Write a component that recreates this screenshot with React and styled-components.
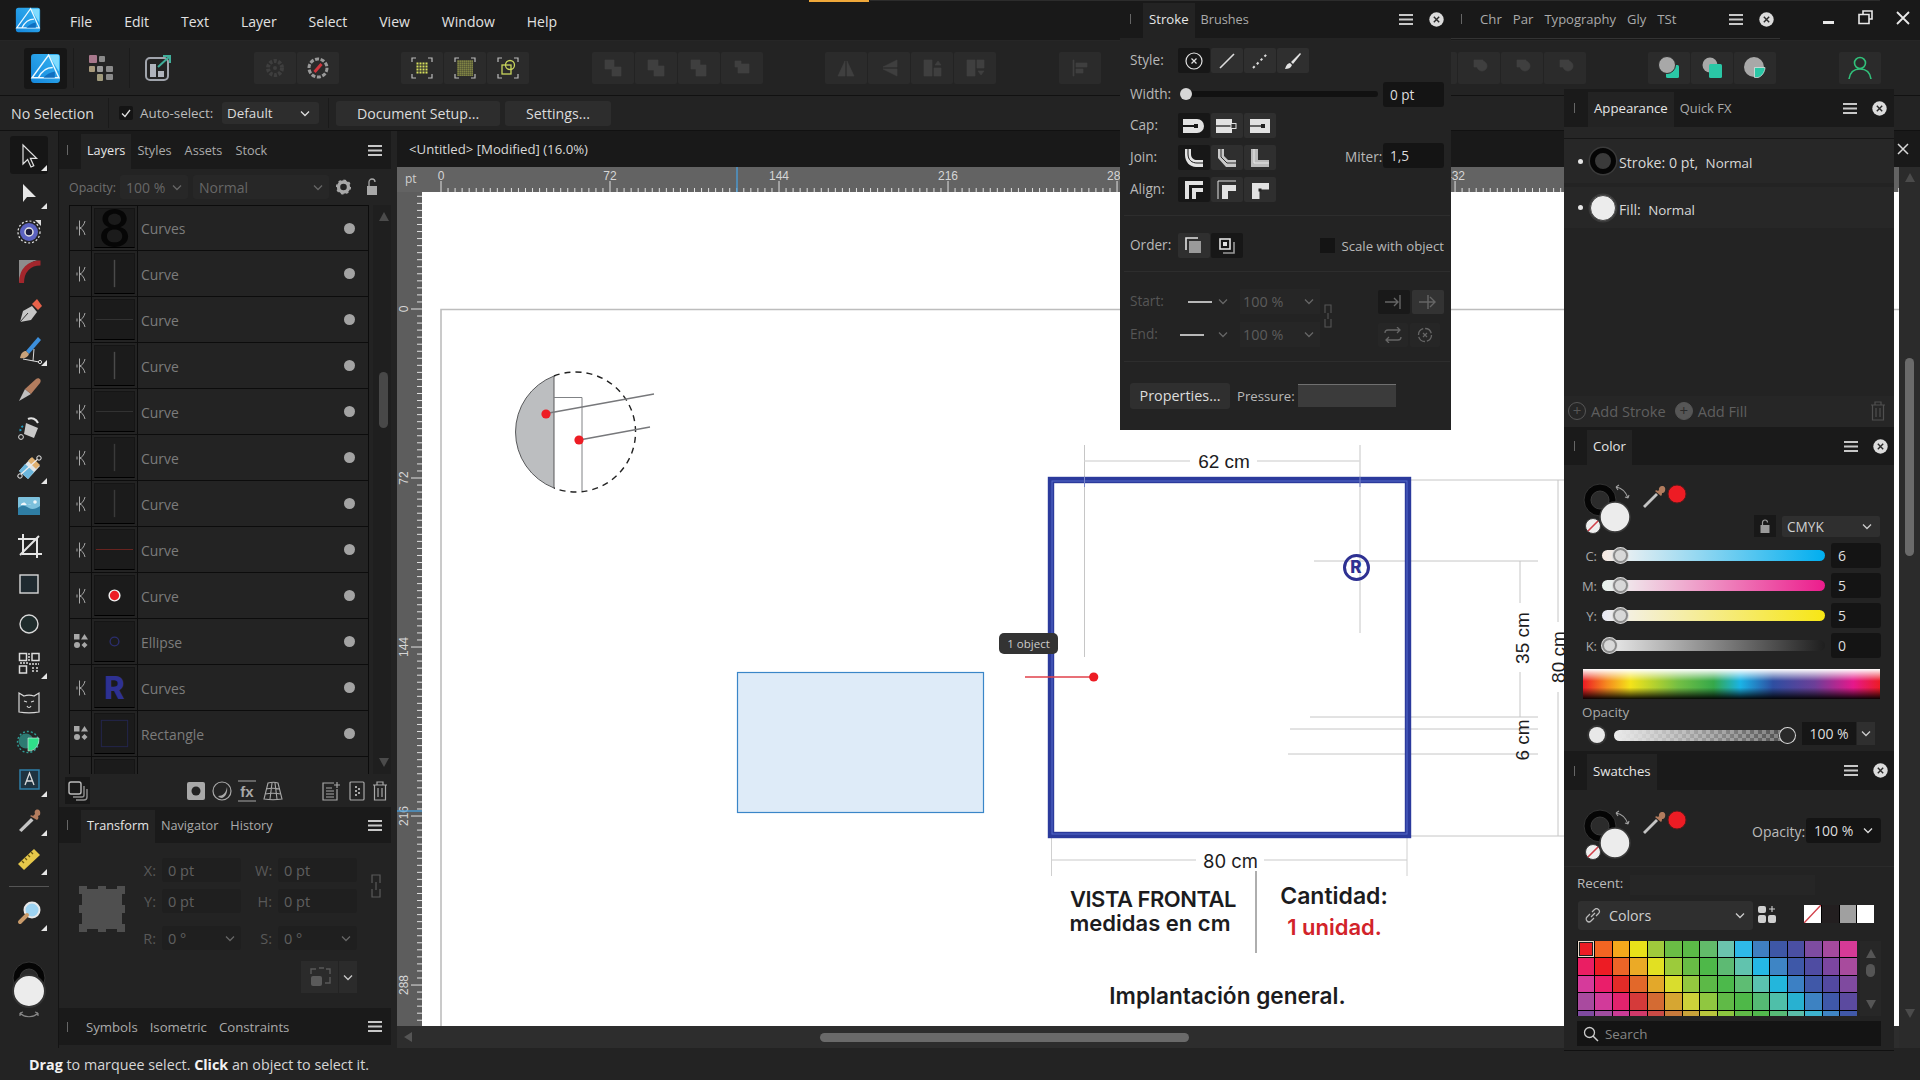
import React from "react";
import styled, { createGlobalStyle } from "styled-components";

const UI_FONT = `"Open Sans", "Noto Sans", sans-serif`;
const CANVAS_X = 422;
const CANVAS_Y = 192;

const GlobalStyle = createGlobalStyle`
  html, body { margin: 0; padding: 0; background: #232323; overflow: hidden; }
  * { box-sizing: border-box; }
  #root { width: 1920px; height: 1080px; }
`;

const Shell = styled.div`
  position: relative;
  width: 1920px;
  height: 1080px;
  display: flex;
  flex-direction: column;
  overflow: hidden;
  background: #232323;
  color: #c8c8c8;
  font-family: ${UI_FONT};
  font-size: 13px;
`;

/* ---------- menu bar ---------- */
const MenuBar = styled.div`
  position: relative;
  height: 41px;
  display: flex;
  align-items: center;
  background: #191919;
  border-bottom: 1px solid #262626;
  padding-left: 15px;
`;
const TopGlow = styled.div`
  position: absolute;
  left: 809px;
  top: 0;
  width: 60px;
  height: 2px;
  background: #efa83a;
`;
const TopHair = styled.div`
  position: absolute;
  left: 870px;
  right: 40px;
  top: 0;
  height: 1px;
  background: #2c2c2c;
`;
const Menus = styled.div`
  display: flex;
  gap: 32px;
  margin-left: 29px;
  margin-top: 3px;
  font-size: 14px;
  color: #e2e2e2;
`;
const PanelTabsTop = styled.div`
  position: absolute;
  left: 1120px;
  top: 3px;
  height: 35px;
  display: flex;
  align-items: stretch;
`;
const TopGroup = styled.div`
  width: ${(p) => p.$w}px;
  display: flex;
  align-items: center;
  position: relative;
`;
const Tick = styled.span`
  width: 1px;
  height: 10px;
  background: #666;
  margin: 0 ${(p) => p.$after ?? 12}px 3px ${(p) => p.$before ?? 10}px;
  flex: none;
`;
const Tab = styled.div`
  align-self: stretch;
  display: flex;
  align-items: center;
  padding: 0 ${(p) => p.$pad ?? 6}px 3px;
  background: ${(p) => (p.$active ? "#232323" : "transparent")};
  color: ${(p) => (p.$active ? "#e6e6e6" : "#aaa")};
  font-size: ${(p) => p.$size ?? 13.2}px;
  white-space: nowrap;
`;
const PushRight = styled.div`
  margin-left: auto;
  display: flex;
  align-items: center;
  gap: ${(p) => p.$gap ?? 15}px;
  padding: 0 ${(p) => p.$pad ?? 7}px 3px 0;
`;
const WindowButtons = styled.div`
  position: absolute;
  left: 1818px;
  top: 9px;
  display: flex;
  gap: 15px;
  align-items: center;
`;
const TopUnderline = styled.div`
  position: absolute;
  left: 1451px;
  top: 38px;
  width: 329px;
  height: 1px;
  background: #333;
`;

/* ---------- toolbar ---------- */
const ToolBar = styled.div`
  height: 55px;
  display: flex;
  align-items: center;
  padding-left: 24px;
  background: #232323;
  border-bottom: 1px solid #111;
`;
const PersonaActive = styled.div`
  width: 43px;
  height: 41px;
  background: #161616;
  display: flex;
  align-items: center;
  justify-content: center;
  border-radius: 3px;
`;
const Persona = styled.div`
  width: 55px;
  display: flex;
  justify-content: center;
`;
const ToolSep = styled.div`
  width: 1px;
  height: 40px;
  background: #1b1b1b;
  margin-left: ${(p) => p.$ml ?? 0}px;
`;
const Group = styled.div`
  display: flex;
  gap: 1px;
  margin-left: ${(p) => p.$ml}px;
`;
const BarBtn = styled.div`
  width: 42px;
  height: 32px;
  background: #2b2b2b;
  border-radius: 2px;
  display: flex;
  align-items: center;
  justify-content: center;
`;

/* ---------- context bar ---------- */
const ContextBar = styled.div`
  height: 35px;
  display: flex;
  align-items: center;
  padding-left: 11px;
  background: #232323;
  border-bottom: 1px solid #111;
  font-size: 14.2px;
  color: #dcdcdc;
`;
const NoSel = styled.div`
  width: 97px;
  white-space: nowrap;
`;
const CtxSep = styled.div`
  width: 1px;
  height: 30px;
  background: #1a1a1a;
  margin-left: ${(p) => p.$ml ?? 0}px;
`;
const Check = styled.div`
  width: 14px;
  height: 14px;
  margin-left: 10px;
  background: #141414;
  border-radius: 2px;
  display: flex;
  align-items: center;
  justify-content: center;
`;
const AutoLabel = styled.div`
  width: 89px;
  padding-left: 7px;
  white-space: nowrap;
  font-size: 13.4px;
  color: #bcbcbc;
`;
const CtxSelect = styled.div`
  width: 97px;
  height: 22px;
  background: #2d2d2d;
  border-radius: 3px;
  display: flex;
  align-items: center;
  justify-content: space-between;
  padding: 0 9px 0 5px;
  font-size: 13.4px;
`;
const CtxButton = styled.div`
  width: ${(p) => p.$w}px;
  height: 25px;
  margin-left: ${(p) => p.$ml}px;
  background: #2d2d2d;
  border-radius: 3px;
  display: flex;
  align-items: center;
  justify-content: center;
  white-space: nowrap;
`;

/* ---------- main ---------- */
const Main = styled.div`
  flex: 1;
  min-height: 0;
  display: flex;
`;
const ToolRail = styled.div`
  width: 59px;
  flex: none;
  padding-top: 5px;
  display: flex;
  flex-direction: column;
  align-items: center;
  background: #232323;
  border-right: 1px solid #141414;
`;
const ToolCell = styled.div`
  position: relative;
  width: 38px;
  height: ${(p) => (p.$active ? 38 : 39.2)}px;
  margin-bottom: ${(p) => (p.$active ? -1 : 0)}px;
  display: flex;
  align-items: center;
  justify-content: center;
  background: ${(p) => (p.$active ? "#161616" : "transparent")};
  border-radius: 3px;
`;
const Corner = styled.span`
  position: absolute;
  right: 1px;
  bottom: 3px;
  width: 0;
  height: 0;
  border-style: solid;
  border-width: 0 0 6px 6px;
  border-color: transparent transparent #e6e6e6 transparent;
`;
const RailRule = styled.div`
  width: 40px;
  height: 1px;
  background: #555;
  margin: 8px 0 7px;
`;
const RailWell = styled.div`
  margin-top: 27px;
`;

const LeftDock = styled.div`
  width: 338px;
  flex: none;
  display: flex;
  flex-direction: column;
  padding-right: 6px;
  background: #232323;
`;
const TabBar = styled.div`
  height: ${(p) => p.$h ?? 38}px;
  flex: none;
  display: flex;
  align-items: stretch;
  background: #1a1a1a;
  padding-top: ${(p) => p.$pt ?? 3}px;
  > ${Tick} {
    align-self: center;
  }
`;
const BarEnd = styled.div`
  margin-left: auto;
  display: flex;
  align-items: center;
  gap: 15px;
  padding: 0 ${(p) => p.$pad ?? 10}px 3px 0;
`;
const LayerOptions = styled.div`
  height: 36px;
  flex: none;
  display: flex;
  align-items: center;
  padding-left: 10px;
  color: #6f6f6f;
  font-size: 13px;
`;
const OptLabel = styled.span`
  width: 45px;
  white-space: nowrap;
  font-size: 12.4px;
`;
const DimSelect = styled.div`
  width: ${(p) => p.$w}px;
  height: 24px;
  margin-left: ${(p) => p.$ml}px;
  display: flex;
  align-items: center;
  justify-content: space-between;
  padding: 0 6px;
  background: #272727;
  border-radius: 3px;
  color: #666;
  font-size: 14px;
`;
const OptIcon = styled.div`
  margin-left: ${(p) => p.$ml}px;
  display: flex;
`;
const LayerArea = styled.div`
  height: 569px;
  flex: none;
  display: flex;
  overflow: hidden;
  padding-left: 10px;
`;
const LayerList = styled.div`
  width: 300px;
  flex: none;
`;
const LayerRow = styled.div`
  height: 46px;
  display: grid;
  grid-template-columns: 22px 46px 1fr 34px;
  align-items: stretch;
  border: 1px solid #0c0c0c;
  border-top: 0;
  &:first-child {
    border-top: 1px solid #0c0c0c;
  }
`;
const LayerType = styled.div`
  display: flex;
  align-items: center;
  justify-content: center;
  border-right: 1px solid #0c0c0c;
`;
const LayerThumb = styled.div`
  display: flex;
  align-items: center;
  justify-content: center;
  min-height: 0;
  border-right: 1px solid #0c0c0c;
  padding: 2px;
`;
const ThumbInner = styled.div`
  width: 100%;
  height: 100%;
  background: #1b1b1b;
  border: 1px solid #151515;
  border-bottom-color: #000;
  display: flex;
  align-items: center;
  justify-content: center;
  font-family: "Inter", "Open Sans", sans-serif;
  font-weight: ${(p) => p.$weight ?? 800};
  line-height: 0.75;
  font-size: ${(p) => p.$size ?? 30}px;
  color: ${(p) => p.$color ?? "#000"};
  svg {
    width: 100%;
    height: 100%;
  }
`;
const LayerName = styled.div`
  display: flex;
  align-items: center;
  padding: 1px 0 0 3px;
  color: #7c7c7c;
  font-size: 13.9px;
`;
const LayerVis = styled.div`
  display: flex;
  align-items: center;
  justify-content: center;
  i {
    width: 11px;
    height: 11px;
    border-radius: 50%;
    background: #a3a3a3;
    margin-left: -4px;
  }
`;
const VScroll = styled.div`
  position: relative;
  width: 21px;
  margin-left: 4px;
  flex: none;
  display: flex;
  flex-direction: column;
  align-items: center;
  background: #1f1f1f;
`;
const ScrollArrow = styled.span`
  position: absolute;
  top: ${(p) => p.$top}px;
  width: 0;
  height: 0;
  border-left: 5px solid transparent;
  border-right: 5px solid transparent;
  ${(p) =>
    p.$down
      ? `border-top: 9px solid ${p.$color ?? "#4b4b4b"};`
      : `border-bottom: 9px solid ${p.$color ?? "#4b4b4b"};`}
`;
const ScrollThumb = styled.span`
  position: absolute;
  top: ${(p) => p.$top}px;
  width: 9px;
  height: ${(p) => p.$h}px;
  background: ${(p) => p.$color ?? "#484848"};
  border-radius: 5px;
`;
const LayerFooter = styled.div`
  height: 33px;
  flex: none;
  display: flex;
  align-items: center;
  padding-left: 6px;
`;
const DarkIcon = styled.div`
  width: 26px;
  height: 27px;
  background: #181818;
  display: flex;
  align-items: center;
  justify-content: center;
  margin-right: 93px;
`;
const FooterIcon = styled.div`
  width: ${(p) => p.$w ?? 26}px;
  margin-left: ${(p) => p.$ml ?? 0}px;
  display: flex;
  justify-content: center;
`;
const TransformBody = styled.div`
  height: 165px;
  flex: none;
  position: relative;
  display: flex;
  padding: 15px 0 0 20px;
  color: #5c5c5c;
  font-size: 14.5px;
`;
const Anchor = styled.div`
  width: 46px;
  margin-top: 28px;
`;
const TfGrid = styled.div`
  margin-left: 17px;
  display: grid;
  grid-template-columns: 20px 79px 14px 23px 79px;
  grid-template-rows: 24px 7px 24px 13px 24px;
  align-items: center;
  align-self: flex-start;
`;
const TfLabel = styled.div`
  text-align: right;
  padding-right: 6px;
  grid-column: ${(p) => p.$col};
  grid-row: ${(p) => p.$row};
  color: #595959;
`;
const TfInput = styled.div`
  height: 24px;
  background: #1f1f1f;
  border-radius: 3px;
  display: flex;
  align-items: center;
  justify-content: space-between;
  padding: 0 6px;
  color: #5f5f5f;
  grid-column: ${(p) => p.$col};
  grid-row: ${(p) => p.$row};
`;
const TfLink = styled.div`
  margin-left: 14px;
  margin-top: 15px;
`;
const TfAction = styled.div`
  position: absolute;
  left: 242px;
  top: 118px;
  display: flex;
  gap: 1px;
`;
const TfActionBtn = styled.div`
  width: ${(p) => p.$w}px;
  height: 32px;
  background: #2b2b2b;
  display: flex;
  align-items: center;
  justify-content: center;
`;

/* ---------- workspace ---------- */
const Workspace = styled.div`
  flex: 1;
  min-width: 0;
  display: flex;
  flex-direction: column;
`;
const DocBar = styled.div`
  height: 36px;
  flex: none;
  display: flex;
  align-items: center;
  justify-content: space-between;
  padding: 0 11px 0 12px;
  background: #191919;
  color: #d8d8d8;
  font-size: 13.2px;
`;
const DocGrid = styled.div`
  flex: 1;
  min-height: 0;
  display: grid;
  grid-template-columns: 25px 1fr 21px;
  grid-template-rows: 25px 1fr 22px;
`;
const PtCell = styled.div`
  background: #636363;
  color: #d0d0d0;
  font-size: 12px;
  padding: 3px 0 0 8px;
`;
const RulerCell = styled.div`
  background: ${(p) => p.$bg ?? "#636363"};
  overflow: hidden;
  display: flex;
`;
const RightScroll = styled.div`
  grid-row: 1 / 4;
  grid-column: 3;
  position: relative;
  display: flex;
  justify-content: center;
  background: #2b2b2b;
`;
const Canvas = styled.div`
  position: relative;
  background: #fff;
  overflow: hidden;
`;
const Drawing = styled.svg`
  position: absolute;
  left: 0;
  top: 0;
`;
const PageText = styled.span`
  position: absolute;
  left: ${(p) => p.$x - CANVAS_X}px;
  top: ${(p) => p.$y - CANVAS_Y}px;
  transform: translate(-50%, -50%) rotate(${(p) => p.$rot ?? 0}deg);
  white-space: nowrap;
  line-height: 1;
  letter-spacing: ${(p) => p.$track ?? 0}px;
  font-family: ${(p) =>
    p.$sans ? `"Liberation Sans", Arial, sans-serif` : `"Inter", "Open Sans", sans-serif`};
  font-size: ${(p) => p.$size}px;
  font-weight: ${(p) => p.$weight ?? 400};
  color: ${(p) => p.$color ?? "#1c1c1e"};
`;
const RegMark = styled.span`
  position: absolute;
  left: ${1356 - CANVAS_X - 13.5}px;
  top: ${567 - CANVAS_Y - 13.5}px;
  width: 27px;
  height: 27px;
  border: 3.5px solid #2e3192;
  border-radius: 50%;
  display: flex;
  align-items: center;
  justify-content: center;
  font-family: "Inter", "Open Sans", sans-serif;
  font-size: 17px;
  line-height: 1;
  font-weight: 800;
  color: #2e3192;
`;
const ObjectTip = styled.div`
  position: absolute;
  left: ${999 - CANVAS_X}px;
  top: ${633 - CANVAS_Y}px;
  width: 59px;
  height: 21px;
  border-radius: 5px;
  background: #333;
  color: #ccc;
  font-size: 11.5px;
  display: flex;
  align-items: center;
  justify-content: center;
`;
const HScroll = styled.div`
  grid-column: 1 / 3;
  position: relative;
  background: #2d2d2d;
`;
const HThumb = styled.div`
  position: absolute;
  left: ${820 - 397}px;
  top: 7px;
  width: 369px;
  height: 9px;
  border-radius: 5px;
  background: #6a6a6a;
`;
const HArrow = styled.span`
  position: absolute;
  left: 7px;
  top: 6px;
  width: 0;
  height: 0;
  border-top: 5px solid transparent;
  border-bottom: 5px solid transparent;
  border-right: 8px solid #555;
`;
const StatusBar = styled.div`
  height: 32px;
  flex: none;
  padding-left: 29px;
  display: flex;
  align-items: center;
  background: #232323;
  color: #d6d6d6;
  font-size: 14.3px;
  b {
    color: #f2f2f2;
    font-weight: 700;
  }
  span {
    white-space: pre;
  }
`;

/* ---------- stroke panel ---------- */
const StrokePanel = styled.div`
  position: absolute;
  left: 1120px;
  top: 38px;
  width: 331px;
  height: 392px;
  background: #232323;
  padding: 0 7px 0 10px;
  font-size: 13.6px;
  color: #b8b8b8;
`;
const SRow = styled.div`
  position: relative;
  display: flex;
  align-items: center;
  height: 25px;
  margin-top: ${(p) => p.$mt}px;
  color: ${(p) => p.$color ?? "inherit"};
`;
const SLabel = styled.div`
  width: 48px;
  flex: none;
  padding-bottom: 2px;
`;
const BtnRow = styled.div`
  display: flex;
  gap: 1px;
`;
const SBtn = styled.div`
  width: 32px;
  height: 25px;
  display: flex;
  align-items: center;
  justify-content: center;
  background: ${(p) => (p.$on ? "#171717" : "#2f2f2f")};
  border-radius: 2px;
`;
const WidthTrack = styled.div`
  position: relative;
  width: 198px;
  height: 6px;
  margin: 0 0 2px 2px;
  border-radius: 3px;
  background: #111;
`;
const WidthKnob = styled.span`
  position: absolute;
  left: 0;
  top: -3px;
  width: 12px;
  height: 12px;
  border-radius: 50%;
  background: #d6d6d6;
`;
const SInput = styled.div`
  position: absolute;
  left: 253px;
  top: ${(p) => p.$top ?? 0}px;
  width: 61px;
  height: 25px;
  background: #141414;
  border-radius: 3px;
  display: flex;
  align-items: center;
  padding-left: 7px;
  color: #ddd;
`;
const MiterLabel = styled.div`
  position: absolute;
  left: 215px;
  padding-bottom: 2px;
  color: #b8b8b8;
`;
const Rule = styled.div`
  height: 1px;
  background: #2d2d2d;
  margin: ${(p) => p.$mt}px -6px 0 -6px;
`;
const ScaleCheck = styled.div`
  display: flex;
  align-items: center;
  gap: 6px;
  margin-left: auto;
  font-size: 13.2px;
  white-space: nowrap;
  span:first-child {
    width: 15px;
    height: 15px;
    background: #141414;
  }
`;
const LineSelect = styled.div`
  width: 52px;
  display: flex;
  align-items: center;
  gap: ${(p) => p.$gap}px;
  justify-content: flex-end;
  padding-right: 2px;
`;
const PctSelect = styled.div`
  width: 80px;
  height: 25px;
  margin-left: 10px;
  display: flex;
  align-items: center;
  justify-content: space-between;
  padding: 0 6px 0 3px;
  background: #262626;
  color: #5c5c5c;
  font-size: 14.4px;
`;
const ArrowBtns = styled.div`
  position: absolute;
  left: 248px;
  display: flex;
  gap: 2px;
`;
const ArrowBtn = styled.div`
  width: ${(p) => p.$w ?? 32}px;
  height: 24px;
  background: ${(p) => p.$bg};
  display: flex;
  align-items: center;
  justify-content: center;
  border-radius: 2px;
`;
const StrokeLink = styled.div`
  position: absolute;
  left: 1324px;
  top: 304px;
`;
const Props = styled.div`
  width: 100px;
  height: 26px;
  background: #2f2f2f;
  border-radius: 3px;
  display: flex;
  align-items: center;
  justify-content: center;
  color: #ddd;
  font-size: 14.4px;
`;
const PressureLabel = styled.div`
  margin-left: 7px;
  width: 61px;
  font-size: 13.2px;
`;
const PressureBox = styled.div`
  width: 98px;
  height: 23px;
  background: #3b3b3b;
  border-top: 1px solid #707070;
`;

/* ---------- right studio ---------- */
const RightDock = styled.div`
  position: absolute;
  left: 1564px;
  top: 89px;
  width: 330px;
  height: 962px;
  display: flex;
  flex-direction: column;
  background: #232323;
  border-bottom: 1px solid #111;
`;
const PanelBody = styled.div`
  position: relative;
  height: ${(p) => p.$h}px;
  flex: none;
`;
const Strip = styled.div`
  height: 12px;
  background: #262626;
  border-bottom: 1px solid #161616;
`;
const ApRow = styled.div`
  height: ${(p) => p.$h}px;
  margin-top: ${(p) => p.$mt ?? 0}px;
  background: #272727;
  display: flex;
  align-items: center;
  padding-left: 14px;
  color: #d8d8d8;
  font-size: 14.2px;
  white-space: pre;
`;
const ApText = styled.span`
  padding-top: 3px;
`;
const Bullet = styled.span`
  width: 5px;
  height: 5px;
  border-radius: 50%;
  background: #e6e6e6;
  margin-right: 7px;
`;
const Well = styled.span`
  width: 26px;
  height: 26px;
  border-radius: 50%;
  margin-right: 3px;
  flex: none;
  background: ${(p) => (p.$fill ? "#ececec" : "#3a3a3a")};
  border: ${(p) => (p.$fill ? "1px solid #444" : "5px solid #050505")};
  box-shadow: 0 0 0 1.5px #3a3a3a;
`;
const Small = styled.span`
  font-size: 13.4px;
`;
const AddRow = styled.div`
  position: absolute;
  left: 0;
  right: 0;
  bottom: 0;
  height: 31px;
  display: flex;
  align-items: center;
  padding: 0 0 2px 4px;
  background: #262626;
  color: #5f5f5f;
  font-size: 14.6px;
  white-space: nowrap;
`;
const AddIcon = styled.span`
  width: 18px;
  height: 18px;
  border-radius: 50%;
  margin-left: ${(p) => p.$ml ?? 0}px;
  margin-right: 5px;
  display: flex;
  align-items: center;
  justify-content: center;
  background: ${(p) => (p.$solid ? "#565656" : "transparent")};
  border: 1px solid #565656;
  color: ${(p) => (p.$solid ? "#2a2a2a" : "#565656")};
  font-size: 15px;
  line-height: 1;
`;
const AddTrash = styled.span`
  margin-left: auto;
  margin-right: 8px;
  display: flex;
`;
const WellGroup = styled.div`
  position: absolute;
  left: 19px;
  top: ${(p) => p.$top}px;
`;
const Lock = styled.div`
  position: absolute;
  left: 190px;
  top: 50px;
  width: 22px;
  height: 22px;
  background: #181818;
  display: flex;
  align-items: center;
  justify-content: center;
`;
const Select = styled.div`
  position: absolute;
  left: 218px;
  top: 51px;
  width: 98px;
  height: 21px;
  background: #2f2f2f;
  border-radius: 2px;
  display: flex;
  align-items: center;
  justify-content: space-between;
  padding: 0 8px 0 5px;
  color: #d0d0d0;
  font-size: 13.6px;
`;
const Sliders = styled.div`
  position: absolute;
  left: 0;
  top: 78px;
  display: grid;
  grid-template-columns: 38px 223px 50px;
  grid-auto-rows: 25px;
  row-gap: 5px;
  column-gap: 0;
  align-items: center;
`;
const SliderLabel = styled.div`
  text-align: right;
  padding-right: 5px;
  color: #a8a8a8;
  font-size: 13px;
`;
const Track = styled.div`
  position: relative;
  width: 223px;
  height: 11px;
  border-radius: 6px;
  background: ${(p) => p.$bg};
`;
const Knob = styled.span`
  position: absolute;
  left: ${(p) => p.$x}px;
  top: 50%;
  width: 15px;
  height: 15px;
  margin: -7.5px 0 0 -7.5px;
  border-radius: 50%;
  background: ${(p) => p.$fill ?? "#d8d8d8"};
  border: 2px solid ${(p) => p.$ring ?? "#8c8c8c"};
  box-shadow: 0 0 0 1px #d8d8d8;
`;
const ValueBox = styled.div`
  margin-left: 6px;
  width: 50px;
  height: 25px;
  background: #141414;
  border-radius: 3px;
  display: flex;
  align-items: center;
  padding-left: 7px;
  color: #dedede;
  font-size: 14px;
`;
const Spectrum = styled.div`
  position: absolute;
  left: 19px;
  top: 204px;
  width: 297px;
  height: 30px;
  background:
    linear-gradient(to bottom, rgba(255, 255, 255, 1) 0%, rgba(255, 255, 255, 0) 40%, rgba(0, 0, 0, 0) 62%, rgba(0, 0, 0, 0.95) 100%),
    linear-gradient(to right, #ed1c24 0%, #f58a1f 8%, #f4e31a 16%, #74bf44 32%, #35a84a 44%, #1ab3e6 53%, #2e4ea1 64%, #6c3f98 78%, #e5188b 91%, #ed1c24 100%);
`;
const OpacityCaption = styled.div`
  position: absolute;
  left: 18px;
  top: 238px;
  color: #a8a8a8;
  font-size: 13.4px;
`;
const OpacityDot = styled.span`
  position: absolute;
  left: 25px;
  top: 262px;
  width: 16px;
  height: 16px;
  border-radius: 50%;
  background: #e8e8e8;
  box-shadow: 0 0 0 2px #333;
`;
const OpacityTrack = styled.div`
  position: absolute;
  left: 50px;
  top: 265px;
  width: 173px;
  height: 11px;
  border-radius: 6px;
  background:
    linear-gradient(to right, rgba(235, 235, 235, 1), rgba(235, 235, 235, 0.05)),
    repeating-conic-gradient(#777 0 25%, #444 0 50%) 0 0 / 8px 8px;
`;
const OpacityValue = styled.div`
  position: absolute;
  left: ${(p) => p.$x}px;
  top: ${(p) => p.$y}px;
  width: 54px;
  height: 23px;
  background: #161616;
  display: flex;
  align-items: center;
  justify-content: center;
  font-size: 14px;
  color: #dedede;
`;
const OpacityChevron = styled.div`
  position: absolute;
  left: 293px;
  top: 257px;
  width: 18px;
  height: 23px;
  background: #2f2f2f;
  display: flex;
  align-items: center;
  justify-content: center;
`;
const SwOpacityLabel = styled.div`
  position: absolute;
  left: 188px;
  top: 32px;
  color: #bbb;
  font-size: 14px;
`;
const SwOpacity = styled.div`
  position: absolute;
  left: 242px;
  top: 28px;
  width: 75px;
  height: 25px;
  background: #141414;
  border-radius: 3px;
  display: flex;
  align-items: center;
  justify-content: space-between;
  padding: 0 8px;
  color: #dedede;
  font-size: 14px;
`;
const SwRule = styled.div`
  position: absolute;
  left: 0;
  right: 0;
  top: 76px;
  height: 1px;
  background: #2a2a2a;
`;
const RecentLabel = styled.div`
  position: absolute;
  left: 13px;
  top: 84px;
  color: #bbb;
  font-size: 13.4px;
`;
const RecentBox = styled.div`
  position: absolute;
  left: 66px;
  top: 85px;
  width: 185px;
  height: 20px;
  background: #262626;
`;
const ColorsSelect = styled.div`
  position: absolute;
  left: 14px;
  top: 111px;
  width: 175px;
  height: 29px;
  background: #2f2f2f;
  border-radius: 3px;
  display: flex;
  align-items: center;
  padding: 0 8px 0 7px;
  gap: 8px;
  color: #d0d0d0;
  font-size: 14.2px;
  svg:last-child {
    margin-left: auto;
  }
`;
const AddSwatch = styled.div`
  position: absolute;
  left: 194px;
  top: 115px;
  display: flex;
`;
const QuickSwatches = styled.div`
  position: absolute;
  left: 240px;
  top: 115px;
  width: 70px;
  height: 18px;
  display: grid;
  grid-template-columns: repeat(4, 1fr);
  gap: 1px;
  background: #000;
`;
const Quick = styled.div`
  background: ${(p) => p.$c};
  display: flex;
`;
const SwatchWrap = styled.div`
  position: absolute;
  left: 13px;
  top: 151px;
  width: 304px;
  height: 75px;
  display: flex;
`;
const SwatchGrid = styled.div`
  width: 280px;
  height: 75px;
  overflow: hidden;
  background: #000;
  display: grid;
  grid-template-columns: repeat(16, 1fr);
  grid-auto-rows: 16.4px;
  gap: 1px;
  padding: 0 0.5px;
`;
const Swatch = styled.div`
  background: ${(p) => p.$c};
  box-shadow: ${(p) => (p.$picked ? "inset 0 0 0 1px #e8d8c8, inset 0 0 0 2px #222" : "none")};
`;
const SwatchScroll = styled.div`
  position: relative;
  width: 21px;
  margin-left: 3px;
  background: #272727;
  display: flex;
  justify-content: center;
`;
const SearchBox = styled.div`
  position: absolute;
  left: 13px;
  top: 231px;
  width: 304px;
  height: 25px;
  background: #141414;
  display: flex;
  align-items: center;
  padding-left: 6px;
  gap: 6px;
  color: #858585;
  font-size: 13.4px;
`;

/* ---------- icons ---------- */
const Burger = () => (
  <svg width="14" height="13" viewBox="0 0 14 13">
    <path d="M0 1h14v2H0zM0 5.5h14v2H0zM0 10h14v2H0z" fill="#c8c8c8" />
  </svg>
);
const CloseDot = () => (
  <svg width="15" height="15" viewBox="0 0 15 15">
    <circle cx="7.5" cy="7.5" r="7.2" fill="#dcdcdc" />
    <path d="M4.8 4.8l5.4 5.4M10.2 4.8l-5.4 5.4" stroke="#2a2a2a" strokeWidth="1.4" />
  </svg>
);
const Chevron = ({ c = "#b8b8b8", s = 10 }) => (
  <svg width={s} height={s * 0.7} viewBox="0 0 10 7">
    <path d="M1 1.5l4 4 4-4" fill="none" stroke={c} strokeWidth="1.3" />
  </svg>
);

const Tools = {
  move: (
    <path d="M9 5v19l4.6-4.4 3.4 7.4 2.8-1.3-3.4-7.4H22.6z" fill="#1a1a1a" stroke="#e2e2e2" strokeWidth="1.2" />
  ),
  node: <path d="M9 6v18l4-5h9z" fill="#e6e6e6" />,
  contour: (
    <g>
      <circle cx="15" cy="15" r="11" fill="none" stroke="#e8e8e8" strokeWidth="1.2" strokeDasharray="2 2" />
      <circle cx="15" cy="15" r="9" fill="#5b62c0" />
      <circle cx="15" cy="15" r="4" fill="#1c1c3c" stroke="#e4e4e4" strokeWidth="1.5" />
      <path d="M21 3h6v6z" fill="#ddd" />
    </g>
  ),
  corner: (
    <g>
      <path d="M5 4h22c-12 0-17 8-19 22H5z" fill="#8d8d8d" />
      <path d="M7.5 27c0-13 8-20 19-20" fill="none" stroke="#a3262c" strokeWidth="5" />
    </g>
  ),
  pen: (
    <g>
      <path d="M6 27l3-11 9-5 5 6-6 8z" fill="#c6c6c6" />
      <path d="M6 27l8-9" stroke="#333" strokeWidth="1" />
      <path d="M18 9l5-5 5 7-4 4z" fill="#e8624a" />
    </g>
  ),
  vbrush: (
    <g>
      <path d="M12 17L24 3l3 3-12 14z" fill="#3c8fdc" />
      <path d="M6 24c1-5 3-7 6-7l3 3c-1 3-4 5-9 4z" fill="#c8a27a" />
      <path d="M19 27l1-12M9 25l16 3" stroke="#ddd" strokeWidth="1" />
      <circle cx="26" cy="28" r="1.6" fill="#222" stroke="#ddd" />
    </g>
  ),
  pencil: (
    <g>
      <path d="M5 27l6-12 6 5z" fill="#c0c0c0" />
      <path d="M11 15L22 5c3-2 6 1 4 4L17 20z" fill="#b27c5e" />
    </g>
  ),
  bucket: (
    <g>
      <path d="M12 10l12 5-4 10-10-4z" fill="#c8c8c8" />
      <path d="M14 6c4-2 8 0 10 4" fill="none" stroke="#e2e2e2" strokeWidth="2" />
      <path d="M9 13c-3 2-3 5-2 7" stroke="#1e9abf" strokeWidth="2" fill="none" strokeDasharray="2 2" />
      <circle cx="7" cy="24" r="2.4" fill="#222" stroke="#ddd" />
    </g>
  ),
  gradient: (
    <g>
      <path d="M5 19L17 6l9 8-12 13z" fill="#dfe6ea" />
      <path d="M11 12l9 8-6 7-9-8z" fill="#6cb6dc" />
      <path d="M14 9l4-4 8 8-4 4z" fill="#e0b070" />
      <path d="M4 25L26 5" stroke="#eee" strokeWidth="1.2" />
      <circle cx="6" cy="24" r="2.2" fill="#222" stroke="#eee" />
      <circle cx="25" cy="6" r="2.2" fill="#222" stroke="#eee" />
    </g>
  ),
  image: (
    <g>
      <rect x="4" y="6" width="22" height="18" fill="#7cc0dc" rx="1" />
      <path d="M4 17c5-4 8-2 11 0s7 1 11-2v9H4z" fill="#2f7ea4" />
      <path d="M7 13c2-2 4-2 5 0s4 0 5 1H7z" fill="#eef6fa" />
      <circle cx="21" cy="11" r="1.8" fill="#eef6fa" />
    </g>
  ),
  crop: (
    <path d="M9 4v20h19M4 9h19v19M6 25L25 6" fill="none" stroke="#e4e4e4" strokeWidth="2" />
  ),
  rect: <rect x="6" y="6" width="18" height="18" fill="#1f2a30" stroke="#d8d8d8" strokeWidth="1.4" />,
  ellipse: <circle cx="15" cy="15" r="9" fill="#1f2c2c" stroke="#d8d8d8" strokeWidth="1.4" />,
  qr: (
    <g fill="none" stroke="#dcdcdc" strokeWidth="1.5">
      <rect x="5.5" y="5.5" width="7" height="7" />
      <rect x="18" y="5.5" width="7" height="7" />
      <rect x="5.5" y="18" width="7" height="7" />
      <path d="M15 5v8M15 16h10M19 19v6M23 19v6M6 15h8" strokeDasharray="2 1" />
    </g>
  ),
  cat: (
    <g>
      <path d="M5 6l5 3c3-1 7-1 10 0l5-3v19c-6 1-14 1-20 0z" fill="#272727" stroke="#d8d8d8" strokeWidth="1.2" />
      <path d="M10 14l3 1M20 14l-3 1M13 19c1 2 3 2 4 0" fill="none" stroke="#d8d8d8" strokeWidth="1.2" />
    </g>
  ),
  assets: (
    <g>
      <circle cx="14" cy="16" r="10.5" fill="none" stroke="#2f9f98" strokeWidth="1.4" strokeDasharray="2 2" />
      <circle cx="12" cy="15" r="7.5" fill="#2d7a72" />
      <path d="M14 12h11c0 8-4 13-11 13z" fill="#2fe08a" stroke="#e4e4e4" strokeWidth="0.6" />
    </g>
  ),
  frame: (
    <g>
      <rect x="6" y="5" width="19" height="19" fill="#1f3340" stroke="#2f7fa8" strokeWidth="1.5" />
      <path d="M11 20l4.5-12L20 20M12.5 16h6" fill="none" stroke="#dcdcdc" strokeWidth="1.3" />
    </g>
  ),
  dropper: (
    <g>
      <path d="M5 25L17 13l2.5 2.5L7.5 27z" fill="#c4c4c4" />
      <path d="M16 11c1-1 2-1 3 0l2-2c-2-6 7-6 5 1l-2 1c1 2 0 3-1 4z" fill="#b27c5e" />
    </g>
  ),
  ruler: (
    <g>
      <path d="M4 20L20 5l6 6-16 15z" fill="#e6c84a" />
      <path d="M8 17l2 2M11 14l2 2M14 11l2 2M17 8l2 2" stroke="#6c5a12" strokeWidth="1.3" />
    </g>
  ),
  zoom: (
    <g>
      <circle cx="18" cy="11" r="7.5" fill="#9dd3f2" stroke="#e8e8e8" strokeWidth="2" />
      <path d="M13 16l-7 7" stroke="#c89a6a" strokeWidth="4" strokeLinecap="round" />
    </g>
  ),
};

const ToolIcon = ({ name }) => (
  <svg width="30" height="30" viewBox="0 0 30 30">
    {Tools[name]}
  </svg>
);

const toolList = [
  ["move", 1, 1],
  ["node", 0, 1],
  ["contour", 0, 0],
  ["corner", 0, 0],
  ["pen", 0, 0],
  ["vbrush", 0, 1],
  ["pencil", 0, 0],
  ["bucket", 0, 0],
  ["gradient", 0, 1],
  ["image", 0, 0],
  ["crop", 0, 0],
  ["rect", 0, 0],
  ["ellipse", 0, 0],
  ["qr", 0, 1],
  ["cat", 0, 0],
  ["assets", 0, 0],
  ["frame", 0, 1],
  ["dropper", 0, 1],
  ["ruler", 0, 1],
];

const CurveGlyph = () => (
  <svg width="10" height="16" viewBox="0 0 10 16">
    <path d="M3.5 0.5v15M9 1C8 5 6 7.5 3.5 8 6 8.5 8 11 9 15M1 6.5v3" fill="none" stroke="#a8a8a8" strokeWidth="1" />
  </svg>
);
const ShapeGlyph = () => (
  <svg width="14" height="15" viewBox="0 0 14 15">
    <rect x="0" y="0" width="5.5" height="5.5" fill="#a8a8a8" />
    <path d="M10.5 0l3.5 5.5H7z" fill="#a8a8a8" />
    <circle cx="3" cy="11" r="3" fill="#a8a8a8" />
    <path d="M10.5 8l3 3-3 3-3-3z" fill="#a8a8a8" />
  </svg>
);
const ThumbLine = ({ v, c = "#3a3a3a" }) => (
  <svg viewBox="0 0 40 40">
    {v ? <path d="M20 6v28" stroke={c} strokeWidth="1.5" /> : <path d="M1 20h38" stroke={c} strokeWidth="1" />}
  </svg>
);
const DotGrid = ({ from, n, step, size }) => (
  <>
    {Array.from({ length: n * n }, (_, i) => (
      <rect
        key={i}
        x={from + (i % n) * step}
        y={from + Math.floor(i / n) * step}
        width={size}
        height={size}
        fill="#d6df5c"
      />
    ))}
  </>
);

const layerRows = [
  { name: "Curves", thumb: "eight" },
  { name: "Curve", thumb: <ThumbLine v c="#4a4a4a" /> },
  { name: "Curve", thumb: <ThumbLine c="#333" /> },
  { name: "Curve", thumb: <ThumbLine v c="#4a4a4a" /> },
  { name: "Curve", thumb: <ThumbLine c="#333" /> },
  { name: "Curve", thumb: <ThumbLine v /> },
  { name: "Curve", thumb: <ThumbLine v /> },
  { name: "Curve", thumb: <ThumbLine c="#6a2420" /> },
  {
    name: "Curve",
    thumb: (
      <svg viewBox="0 0 40 40">
        <circle cx="20" cy="20" r="5.5" fill="#ed1c24" stroke="#f0f0f0" strokeWidth="1.5" />
      </svg>
    ),
  },
  {
    name: "Ellipse",
    shape: true,
    thumb: (
      <svg viewBox="0 0 40 40">
        <circle cx="20" cy="20" r="4.5" fill="none" stroke="#2b2e6e" strokeWidth="1.4" />
      </svg>
    ),
  },
  { name: "Curves", thumb: "R" },
  {
    name: "Rectangle",
    shape: true,
    thumb: (
      <svg viewBox="0 0 40 40">
        <rect x="6.5" y="6.5" width="27" height="27" fill="none" stroke="#24264e" strokeWidth="1" />
      </svg>
    ),
  },
  { name: "", thumb: null, tail: true },
];

const swatchColors = [
  "#ed1c24 #f26522 #f5a81c #e8e11a #9fca3c #6abd45 #5bb947 #62bb6a #6bc4ae #2eb9e9 #3f7fc1 #3e57a6 #4a4fa3 #7e4ca1 #a54a9e #d63a96",
  "#ea1e63 #ed1c24 #ec6527 #ebaa26 #e2e022 #9ccb3b #68bc45 #4eb849 #5dba73 #61c3ae #25b8e6 #3e85c5 #3e58a8 #4f4ca2 #7c46a0 #a84b9d",
  "#d63a9b #ea1e6a #e32b28 #e2682a #e3a82a #d9dd2d #93c83f #5cb947 #4cb94b #5ebd73 #5ac2b0 #23b6dc #3c80c4 #4058a8 #5349a1 #7f4a9f",
  "#a94a9f #d23a9a #e2236d #d53a3a #d46b33 #d6a632 #cdd13a #90c740 #60ba47 #4eb848 #55ba74 #4fbfa9 #28b1d1 #3d82c2 #3f58a9 #5b4a9f",
  "#7f4aa0 #a04da0 #ca3b95 #d0396a #c94a45 #c7793b #c8a33a #b8c53d #8cc53f #60b947 #52b84d #57ba76 #5abdaa #3db3cf #3f85c4 #4058a8",
]
  .join(" ")
  .split(" ");

const cmyk = [
  ["C:", "linear-gradient(to right, #f6e8e0 0%, #e4eef2 12%, #00aeef 100%)", 18, "6"],
  ["M:", "linear-gradient(to right, #e6f2ec 0%, #f0e4ea 12%, #ec1c8c 100%)", 18, "5"],
  ["Y:", "linear-gradient(to right, #e6e8f4 0%, #f4f0e0 12%, #f7e614 100%)", 18, "5"],
  ["K:", "linear-gradient(to right, #f0f0f0 0%, #1e1e1e 100%)", 7, "0"],
];

const AppLogo = ({ size = 30 }) => (
  <svg width={size} height={size} viewBox="0 0 30 30">
    <defs>
      <linearGradient id="afLogo" x1="0" y1="1" x2="1" y2="0">
        <stop offset="0" stopColor="#1487dc" />
        <stop offset="1" stopColor="#37b4f2" />
      </linearGradient>
    </defs>
    <rect x="1" y="1" width="28" height="28" rx="3" fill="url(#afLogo)" />
    <path d="M18 2h10v16z" fill="#7fdcff" />
    <path d="M2 24L18 2l10 22H2zM8 24c3-6 8-10 14-10" fill="none" stroke="#ecf9ff" strokeWidth="1.4" />
    <path d="M13 24c3-3 6-5 11-6v6z" fill="#0f6fc0" />
  </svg>
);

const WellCluster = () => (
  <svg width="105" height="58" viewBox="0 0 105 58">
    <circle cx="17" cy="17" r="16" fill="#050505" stroke="#333" />
    <circle cx="17" cy="17" r="9" fill="#2b2b2b" stroke="#3c3c3c" />
    <circle cx="32" cy="34" r="15" fill="#ececec" stroke="#3a3a3a" strokeWidth="1.5" />
    <circle cx="10" cy="43" r="7.5" fill="#efefef" stroke="#3a3a3a" />
    <path d="M5 48L15 38" stroke="#d2404a" strokeWidth="1.6" />
    <path d="M33 4c6 1 10 5 12 11M33 4l3-2M33 4l2 3M45 15l-3-1M45 15l1-3" fill="none" stroke="#a0a0a0" strokeWidth="1.1" />
    <path d="M60 23L73 10l2 2-13 13z" fill="#c4c4c4" />
    <path d="M72 8c1-1 2-1 3 0l1-1c-1-5 8-6 6 1-1 2-2 2-3 2 0 1 0 2-1 3z" fill="#b27c5e" />
    <circle cx="94" cy="11" r="9" fill="#ed1c24" stroke="#5c1a1a" strokeWidth="1" />
  </svg>
);

const Dim = ({ d, w = 22, h = 20, stroke = "#3f3f3f", fill = "#3f3f3f" }) => (
  <svg width={w} height={h} viewBox="0 0 22 20">
    <path d={d} fill={fill} stroke={stroke} strokeWidth="0.6" />
  </svg>
);

const dimSquares = "M3 2h9v9H3zM10 9h9v9h-9z";
const dimBack = "M3 2h9v9H3zM8 7h10v11H8z";
const dimGeo = "M6 2h9v7H6zM9 8a5 5 0 1 1 10 0 5 5 0 1 1-10 0z";

export default function App() {
  const topTicks = Array.from({ length: 209 }, (_, i) => i);
  const leftTicks = Array.from({ length: 120 }, (_, i) => i - 17);
  return (
    <Shell>
      <GlobalStyle />

      <MenuBar>
        <TopGlow />
        <TopHair />
        <AppLogo size={26} />
        <Menus>
          {["File", "Edit", "Text", "Layer", "Select", "View", "Window", "Help"].map((m) => (
            <span key={m}>{m}</span>
          ))}
        </Menus>
        <PanelTabsTop>
          <TopGroup $w={331}>
            <Tick $after={12} />
            <Tab $active>Stroke</Tab>
            <Tab $size={12.7}>Brushes</Tab>
            <PushRight $gap={16}>
              <Burger />
              <CloseDot />
            </PushRight>
          </TopGroup>
          <TopGroup $w={330}>
            <Tick $before={10} $after={18} />
            <Tab $pad={0}>Chr</Tab>
            <Tab $pad={11}>Par</Tab>
            <Tab $pad={0} $size={13}>Typography</Tab>
            <Tab $pad={11} $size={13}>Gly</Tab>
            <Tab $pad={0}>TSt</Tab>
            <PushRight $gap={16} $pad={7}>
              <Burger />
              <CloseDot />
            </PushRight>
          </TopGroup>
        </PanelTabsTop>
        <TopUnderline />
        <WindowButtons>
          <svg width="22" height="20" viewBox="0 0 22 20">
            <rect x="5" y="12" width="11" height="3" fill="#e8e8e8" />
          </svg>
          <svg width="22" height="20" viewBox="0 0 22 20">
            <path d="M8 5V2h9v8h-3M4 5.5h10v9H4z" fill="none" stroke="#e8e8e8" strokeWidth="1.6" />
          </svg>
          <svg width="22" height="20" viewBox="0 0 22 20">
            <path d="M5 3l12 12M17 3L5 15" stroke="#e8e8e8" strokeWidth="1.8" />
          </svg>
        </WindowButtons>
      </MenuBar>

      <ToolBar>
        <PersonaActive>
          <AppLogo size={31} />
        </PersonaActive>
        <ToolSep $ml={6} />
        <Persona>
          <svg width="28" height="28" viewBox="0 0 28 28">
            <rect x="1" y="1" width="8" height="8" rx="1" fill="#a8788c" />
            <rect x="11" y="2" width="6" height="6" rx="1" fill="#8a8a8a" />
            <rect x="1" y="12" width="6" height="6" rx="1" fill="#a89a7c" />
            <rect x="9" y="12" width="6" height="6" rx="1" fill="#9a9a9a" />
            <rect x="18" y="12" width="7" height="6" rx="1" fill="#8a8a8a" />
            <rect x="9" y="20" width="6" height="7" rx="1" fill="#a09a7c" />
            <rect x="18" y="20" width="7" height="6" rx="1" fill="#8a8a8a" />
          </svg>
        </Persona>
        <ToolSep />
        <Persona>
          <svg width="28" height="28" viewBox="0 0 28 28">
            <rect x="2" y="4" width="22" height="22" rx="4" fill="none" stroke="#a0a4ac" strokeWidth="2" />
            <rect x="6" y="10" width="6" height="13" fill="#b0b4bc" />
            <rect x="14" y="17" width="6" height="6" fill="#b0b4bc" />
            <path d="M14 13l11-10M19 2h7v7" fill="none" stroke="#3fae9a" strokeWidth="2" />
          </svg>
        </Persona>
        <Group $ml={69}>
          <BarBtn>
            <svg width="26" height="26" viewBox="0 0 26 26">
              <circle cx="13" cy="13" r="7" fill="none" stroke="#3e3e3e" strokeWidth="4" strokeDasharray="3 1.5" />
              <circle cx="13" cy="13" r="2" fill="#3e3e3e" />
            </svg>
          </BarBtn>
          <BarBtn>
            <svg width="26" height="26" viewBox="0 0 26 26">
              <circle cx="13" cy="13" r="9" fill="none" stroke="#9a9a9a" strokeWidth="3" strokeDasharray="4 1.6" />
              <circle cx="13" cy="13" r="5.5" fill="#2b2b2b" />
              <path d="M9.5 17L16.5 9" stroke="#d0363e" strokeWidth="3" />
            </svg>
          </BarBtn>
        </Group>
        <Group $ml={62}>
          <BarBtn>
            <svg width="26" height="26" viewBox="0 0 26 26">
              <path d="M3 7V3h4M19 3h4v4M3 19v4h4M19 23h4v-4" fill="none" stroke="#bbb" strokeWidth="1.2" />
              <DotGrid from={7.5} n={4} step={3} size={2} />
            </svg>
          </BarBtn>
          <BarBtn>
            <svg width="26" height="26" viewBox="0 0 26 26">
              <path d="M3 7V3h4M19 3h4v4M3 19v4h4M19 23h4v-4" fill="none" stroke="#bbb" strokeWidth="1.2" />
              <DotGrid from={5.5} n={8} step={2} size={1.2} />
            </svg>
          </BarBtn>
          <BarBtn>
            <svg width="26" height="26" viewBox="0 0 26 26">
              <path d="M3 7V3h4M19 3h4v4M3 19v4h4M19 23h4v-4" fill="none" stroke="#bbb" strokeWidth="1.2" />
              <rect x="7" y="10" width="9" height="9" fill="none" stroke="#c9d65c" strokeWidth="1.3" />
              <circle cx="15" cy="10" r="4.5" fill="none" stroke="#c9d65c" strokeWidth="1.3" />
            </svg>
          </BarBtn>
        </Group>
        <Group $ml={63}>
          <BarBtn><Dim d={dimSquares} /></BarBtn>
          <BarBtn><Dim d="M3 2h10v10H3zM9 8h10v10H9z" /></BarBtn>
          <BarBtn><Dim d={dimBack} /></BarBtn>
          <BarBtn><Dim d="M4 3h6v6H4zM7 6h11v9H7z" /></BarBtn>
        </Group>
        <Group $ml={62}>
          <BarBtn><Dim d="M10 3v15H3zM12 3l7 15h-7z" /></BarBtn>
          <BarBtn><Dim d="M19 2v7H5zM19 11v7L5 11z" /></BarBtn>
          <BarBtn><Dim d="M3 2h8v16H3zM13 10h7v8h-7zM14 7l3-4 3 4z" /></BarBtn>
          <BarBtn><Dim d="M3 2h8v16H3zM13 2h7v8h-7zM14 13l3 4 3-4z" /></BarBtn>
        </Group>
        <Group $ml={63}>
          <BarBtn><Dim d="M4 2h1v16H4zM7 5h11v4H7zM7 11h7v4H7z" /></BarBtn>
        </Group>
        <Group $ml={314}>
          <BarBtn><Dim d={dimGeo} /></BarBtn>
          <BarBtn><Dim d={dimGeo} /></BarBtn>
          <BarBtn><Dim d={dimGeo} /></BarBtn>
          <BarBtn><Dim d={dimGeo} /></BarBtn>
        </Group>
        <Group $ml={62}>
          <BarBtn>
            <svg width="26" height="26" viewBox="0 0 26 26">
              <rect x="10" y="10" width="13" height="13" rx="1.5" fill="#2ac7a6" />
              <circle cx="11" cy="10" r="8.5" fill="#a8a8a8" stroke="#2b2b2b" />
            </svg>
          </BarBtn>
          <BarBtn>
            <svg width="26" height="26" viewBox="0 0 26 26">
              <circle cx="11" cy="10" r="7.5" fill="#a8a8a8" />
              <rect x="10" y="9" width="13" height="14" rx="1.5" fill="#2ac7a6" />
            </svg>
          </BarBtn>
          <BarBtn>
            <svg width="26" height="26" viewBox="0 0 26 26">
              <circle cx="12" cy="12" r="10" fill="#a8a8a8" />
              <path d="M12.5 12.5H23c0 4-3 9-7 10h-3.5z" fill="#2ac7a6" stroke="#e8e8e8" strokeWidth="0.7" />
            </svg>
          </BarBtn>
        </Group>
        <Group $ml={63}>
          <BarBtn>
            <svg width="26" height="26" viewBox="0 0 26 26">
              <circle cx="13" cy="8" r="5.5" fill="none" stroke="#31c07a" strokeWidth="1.6" />
              <path d="M2 24c1-7 5-10 11-10s10 3 11 10" fill="none" stroke="#31c07a" strokeWidth="1.6" />
            </svg>
          </BarBtn>
        </Group>
      </ToolBar>

      <ContextBar>
        <NoSel>No Selection</NoSel>
        <CtxSep />
        <Check>
          <svg width="10" height="9" viewBox="0 0 10 9">
            <path d="M1 4.5l3 3 5-6.5" fill="none" stroke="#e0e0e0" strokeWidth="1.3" />
          </svg>
        </Check>
        <AutoLabel>Auto-select:</AutoLabel>
        <CtxSelect>
          Default <Chevron c="#ddd" />
        </CtxSelect>
        <CtxSep $ml={9} />
        <CtxButton $w={164} $ml={7}>Document Setup...</CtxButton>
        <CtxButton $w={106} $ml={5}>Settings...</CtxButton>
      </ContextBar>

      <Main>
        <ToolRail>
          {toolList.map(([name, active, corner]) => (
            <ToolCell key={name} $active={!!active}>
              <ToolIcon name={name} />
              {corner ? <Corner /> : null}
            </ToolCell>
          ))}
          <RailRule />
          <ToolCell>
            <ToolIcon name="zoom" />
            <Corner />
          </ToolCell>
          <RailWell>
            <svg width="36" height="62" viewBox="0 0 36 62">
              <circle cx="18" cy="17" r="16" fill="#050505" stroke="#333" />
              <circle cx="18" cy="17" r="9" fill="#2b2b2b" stroke="#3c3c3c" />
              <circle cx="18" cy="30" r="16" fill="#ececec" stroke="#333" strokeWidth="2" />
              <path d="M9 52c5 5 13 5 18 0M9 52l3-1M9 52l0 3M27 52l-3-1M27 52l0 3" fill="none" stroke="#888" strokeWidth="1.2" />
            </svg>
          </RailWell>
        </ToolRail>

        <LeftDock>
          <TabBar>
            <Tick $before={8} $after={13} />
            <Tab $active $size={12.7}>Layers</Tab>
            <Tab $pad={6} $size={12.7}>Styles</Tab>
            <Tab $pad={7} $size={12.7}>Assets</Tab>
            <Tab $pad={6} $size={12.7}>Stock</Tab>
            <BarEnd $pad={9}>
              <Burger />
            </BarEnd>
          </TabBar>
          <LayerOptions>
            <OptLabel>Opacity:</OptLabel>
            <DimSelect $w={68} $ml={6}>
              100 % <Chevron c="#666" />
            </DimSelect>
            <DimSelect $w={136} $ml={5}>
              Normal <Chevron c="#666" />
            </DimSelect>
            <OptIcon $ml={7}>
              <svg width="15" height="16" viewBox="0 0 15 16">
                <circle cx="7.5" cy="8" r="5" fill="none" stroke="#a8a8a8" strokeWidth="3.4" />
                <circle cx="7.5" cy="8" r="6.8" fill="none" stroke="#a8a8a8" strokeWidth="1.6" strokeDasharray="2.6 2.7" />
              </svg>
            </OptIcon>
            <OptIcon $ml={15}>
              <svg width="12" height="18" viewBox="0 0 12 18">
                <path d="M3 8V4a3 3 0 0 1 6 0" fill="none" stroke="#a8a8a8" strokeWidth="1.3" />
                <rect x="1" y="8" width="10" height="9" fill="#a8a8a8" />
              </svg>
            </OptIcon>
          </LayerOptions>
          <LayerArea>
            <LayerList>
              {layerRows.map((row, i) => (
                <LayerRow key={i}>
                  <LayerType>{row.tail ? null : row.shape ? <ShapeGlyph /> : <CurveGlyph />}</LayerType>
                  <LayerThumb>
                    {row.thumb === "eight" ? (
                      <ThumbInner $size={52} $weight={500} $color="#060606">8</ThumbInner>
                    ) : row.thumb === "R" ? (
                      <ThumbInner $size={31} $color="#2e3192">R</ThumbInner>
                    ) : (
                      <ThumbInner>{row.thumb}</ThumbInner>
                    )}
                  </LayerThumb>
                  <LayerName>{row.name}</LayerName>
                  <LayerVis>{row.tail ? null : <i />}</LayerVis>
                </LayerRow>
              ))}
            </LayerList>
            <VScroll>
              <ScrollArrow $top={7} />
              <ScrollThumb $top={167} $h={56} />
              <ScrollArrow $top={553} $down />
            </VScroll>
          </LayerArea>
          <LayerFooter>
            <DarkIcon>
              <svg width="22" height="22" viewBox="0 0 22 22">
                <rect x="2" y="2" width="12" height="12" rx="2" fill="#1a1a1a" stroke="#bcbcbc" strokeWidth="1.4" />
                <path d="M17 6v9a2 2 0 0 1-2 2H6M20 9v8a3 3 0 0 1-3 3H9" fill="none" stroke="#8f8f8f" strokeWidth="1.4" />
              </svg>
            </DarkIcon>
            <FooterIcon>
              <svg width="20" height="20" viewBox="0 0 20 20">
                <rect x="1" y="1" width="18" height="18" rx="2" fill="#a8a8a8" />
                <circle cx="10" cy="10" r="4.5" fill="#222" />
              </svg>
            </FooterIcon>
            <FooterIcon>
              <svg width="20" height="20" viewBox="0 0 20 20">
                <circle cx="10" cy="10" r="9" fill="none" stroke="#a8a8a8" strokeWidth="1.2" />
                <path d="M6 15c5 0 8-3 9-9 1 6-2 10-5 11-2 0-3-1-4-2z" fill="#a8a8a8" />
              </svg>
            </FooterIcon>
            <FooterIcon>
              <svg width="20" height="22" viewBox="0 0 20 22">
                <path d="M1 1h18M1 21h18" stroke="#a8a8a8" strokeWidth="1" />
                <text x="10" y="17" textAnchor="middle" fontFamily="Liberation Sans" fontWeight="700" fontSize="15" fill="#a8a8a8">fx</text>
              </svg>
            </FooterIcon>
            <FooterIcon>
              <svg width="20" height="20" viewBox="0 0 20 20">
                <path d="M5 2c4-1 7-1 10 0l4 16c-6 1-12 1-18 0zM9 2L7 18M12 2l2 16M3.2 8c4-1 9-1 13.6 0M2 13c5-1 11-1 16 0" fill="none" stroke="#a8a8a8" strokeWidth="1.1" />
              </svg>
            </FooterIcon>
            <FooterIcon $ml={33} $w={26}>
              <svg width="20" height="20" viewBox="0 0 20 20">
                <path d="M13 2H2v17h14V8" fill="none" stroke="#a8a8a8" strokeWidth="1.2" />
                <path d="M5 7h6M5 10h8M5 13h8M5 16h8M16 1v6M13 4h6" stroke="#a8a8a8" strokeWidth="1.2" />
              </svg>
            </FooterIcon>
            <FooterIcon>
              <svg width="16" height="20" viewBox="0 0 16 20">
                <rect x="1" y="1" width="14" height="18" rx="1" fill="none" stroke="#a8a8a8" strokeWidth="1.2" />
                <path d="M6 5h2v2H6zM9 7h2v2H9zM6 9h2v2H6zM9 11h2v2H9zM6 13h2v2H6z" fill="#a8a8a8" />
              </svg>
            </FooterIcon>
            <FooterIcon $w={22}>
              <svg width="16" height="20" viewBox="0 0 16 20">
                <path d="M1 4h14M5 4V1h6v3M2.5 4v15h11V4M6 7v9M10 7v9" fill="none" stroke="#a8a8a8" strokeWidth="1.2" />
              </svg>
            </FooterIcon>
          </LayerFooter>
          <TabBar $h={36}>
            <Tick $before={8} $after={13} />
            <Tab $active $size={12.7}>Transform</Tab>
            <Tab $size={12.7}>Navigator</Tab>
            <Tab $size={12.7}>History</Tab>
            <BarEnd $pad={9}>
              <Burger />
            </BarEnd>
          </TabBar>
          <TransformBody>
            <Anchor>
              <svg width="46" height="46" viewBox="0 0 46 46">
                <path d="M0 0h8v3h11v-3h8v3h11v-3h8v8h-3v11h3v8h-3v11h3v8h-8v-3h-11v3h-8v-3h-11v3h-8v-8h3v-11h-3v-8h3v-11h-3z" fill="#4f4f4f" />
              </svg>
            </Anchor>
            <TfGrid>
              <TfLabel $col={1} $row={1}>X:</TfLabel>
              <TfInput $col={2} $row={1}>0 pt</TfInput>
              <TfLabel $col={4} $row={1}>W:</TfLabel>
              <TfInput $col={5} $row={1}>0 pt</TfInput>
              <TfLabel $col={1} $row={3}>Y:</TfLabel>
              <TfInput $col={2} $row={3}>0 pt</TfInput>
              <TfLabel $col={4} $row={3}>H:</TfLabel>
              <TfInput $col={5} $row={3}>0 pt</TfInput>
              <TfLabel $col={1} $row={5}>R:</TfLabel>
              <TfInput $col={2} $row={5}>0 ° <Chevron c="#666" /></TfInput>
              <TfLabel $col={4} $row={5}>S:</TfLabel>
              <TfInput $col={5} $row={5}>0 ° <Chevron c="#666" /></TfInput>
            </TfGrid>
            <TfLink>
              <svg width="10" height="26" viewBox="0 0 10 26">
                <path d="M1 10V2h8v8M1 16v8h8v-8M5 9v8" fill="none" stroke="#5a5a5a" strokeWidth="1.2" />
              </svg>
            </TfLink>
            <TfAction>
              <TfActionBtn $w={37}>
                <svg width="22" height="22" viewBox="0 0 22 22">
                  <rect x="2" y="10" width="11" height="10" rx="2" fill="#5a5a5a" />
                  <path d="M2 8V3h5M10 2h5M17 3h4v5M21 11v6h-5" fill="none" stroke="#5a5a5a" strokeWidth="1.4" />
                </svg>
              </TfActionBtn>
              <TfActionBtn $w={18}>
                <Chevron c="#c8c8c8" />
              </TfActionBtn>
            </TfAction>
          </TransformBody>
          <TabBar $h={37}>
            <Tick $before={8} $after={18} />
            <Tab $pad={0}>Symbols</Tab>
            <Tab $pad={12}>Isometric</Tab>
            <Tab $pad={0}>Constraints</Tab>
            <BarEnd $pad={9}>
              <Burger />
            </BarEnd>
          </TabBar>
        </LeftDock>

        <Workspace>
          <DocBar>
            <span>&lt;Untitled&gt; [Modified] (16.0%)</span>
            <svg width="12" height="12" viewBox="0 0 12 12">
              <path d="M1 1l10 10M11 1L1 11" stroke="#d8d8d8" strokeWidth="1.5" />
            </svg>
          </DocBar>
          <DocGrid>
            <PtCell>pt</PtCell>
            <RulerCell>
              <svg width="1477" height="25" viewBox="0 0 1477 25">
                {topTicks.map((i) => {
                  const x = 19 + i * 7.042;
                  const major = i % 24 === 0;
                  return (
                    <line key={i} x1={x} x2={x} y1={major ? 14 : 21} y2={25} stroke="#e0e0e0" strokeWidth="1" />
                  );
                })}
                {[0, 72, 144, 216, 288, 360, 432, 504, 576].map((v, i) => (
                  <text key={v} x={19 + i * 169} y="13" textAnchor="middle" fontFamily="Liberation Sans" fontSize="12" fill="#d6d6d6">
                    {v}
                  </text>
                ))}
                <line x1={315} x2={315} y1="0" y2="25" stroke="#4a9bd4" strokeWidth="1.4" />
              </svg>
            </RulerCell>
            <RightScroll>
              <ScrollArrow $top={6} />
              <ScrollThumb $top={191} $h={198} $color="#6a6a6a" />
              <ScrollArrow $top={842} $down />
            </RightScroll>
            <RulerCell $bg="#5d5d5d">
              <svg width="25" height="834" viewBox="0 0 25 834">
                {leftTicks.map((i) => {
                  const y = 117 + i * 7.042;
                  const major = (i + 240) % 24 === 0;
                  return <line key={i} x1={major ? 14 : 20} x2={25} y1={y} y2={y} stroke="#e0e0e0" strokeWidth="1" />;
                })}
                {[0, 72, 144, 216, 288].map((v, i) => {
                  const y = 117 + i * 169;
                  return (
                    <text key={v} x="11" y={y} textAnchor="middle" transform={`rotate(-90 11 ${y})`} dy="0" fontFamily="Liberation Sans" fontSize="12" fill="#d6d6d6">
                      {v}
                    </text>
                  );
                })}
                <line x1="0" x2="25" y1={811 - CANVAS_Y} y2={811 - CANVAS_Y} stroke="#4a9bd4" strokeWidth="1.4" />
              </svg>
            </RulerCell>
            <Canvas>
              <Drawing width="1477" height="834" viewBox={`${CANVAS_X} ${CANVAS_Y} 1477 834`}>
                <path d="M441 1026V309.5H1899" fill="none" stroke="#bdbdbd" strokeWidth="1.6" />

                {/* detail circle */}
                <path d="M554 376A60 60 0 0 0 554 488z" fill="#bcbec0" stroke="#58595b" strokeWidth="1" />
                <path d="M554 376A60 60 0 1 1 554 488" fill="none" stroke="#222" strokeWidth="1.4" strokeDasharray="6 5" />
                <path d="M554 397.5h28V491" fill="none" stroke="#808285" strokeWidth="1" />
                <path d="M549 413L654 394M582 439.5L650 427" stroke="#77787b" strokeWidth="1.4" />
                <circle cx="546" cy="414" r="4.6" fill="#ed1c24" />
                <circle cx="579" cy="440" r="4.6" fill="#ed1c24" />

                {/* selected rectangle */}
                <rect x="737.5" y="672.5" width="246" height="140" fill="#deebf8" stroke="#3a86c8" strokeWidth="1.2" />

                {/* guide lines */}
                <g stroke="#c6c6c6" strokeWidth="1">
                  <path d="M1084.5 445V657M1360 445V633" />
                  <path d="M1314 561H1538M1310 717H1538M1290 729H1538M1288 754H1538" />
                  <path d="M1520 561V603M1520 672V717" />
                  <path d="M1558 480V622M1558 692V836M1410 480H1564M1410 836H1564" />
                </g>
                <g stroke="#dcdcdc" strokeWidth="1.4">
                  <path d="M1084.5 461H1190M1257 461H1360" />
                  <path d="M1051.5 860H1196M1264 860H1407" />
                </g>
                <path d="M1051.5 838V876M1407 838V876" stroke="#d0d0d0" strokeWidth="1" />

                {/* big frame */}
                <rect x="1051" y="480" width="357" height="355" fill="none" stroke="#2b3a9c" strokeWidth="6.4" />
                <rect x="1052" y="481" width="355" height="353" fill="none" stroke="#5568c8" strokeWidth="1" />
                <path d="M1084.5 477V487M1360 477V487" stroke="#7a86c8" strokeWidth="1" />

                {/* red marker */}
                <path d="M1025 677H1092" stroke="#e0404a" strokeWidth="1.5" />
                <circle cx="1093.7" cy="677" r="4.6" fill="#ed1c24" />

                <path d="M1256 871V953" stroke="#8c8c8c" strokeWidth="1.4" />
              </Drawing>
              <PageText $x={1224} $y={461} $size={19} $sans>62 cm</PageText>
              <RegMark>R</RegMark>
              <PageText $x={1521.5} $y={638} $size={19} $rot={-90} $sans>35 cm</PageText>
              <PageText $x={1521.5} $y={740} $size={19} $rot={-90} $sans>6 cm</PageText>
              <PageText $x={1558} $y={657} $size={19} $rot={-90} $sans>80 cm</PageText>
              <PageText $x={1230.5} $y={861} $size={18.5}>80 cm</PageText>
              <PageText $x={1153} $y={899} $size={22} $weight={600} $track={-0.5}>VISTA FRONTAL</PageText>
              <PageText $x={1150} $y={923} $size={22} $weight={600}>medidas en cm</PageText>
              <PageText $x={1334} $y={896} $size={23} $weight={600}>Cantidad:</PageText>
              <PageText $x={1334.5} $y={927} $size={22} $weight={600} $color="#d2232a">1 unidad.</PageText>
              <PageText $x={1227.5} $y={996} $size={22.6} $weight={600}>Implantación general.</PageText>
              <ObjectTip>1 object</ObjectTip>
            </Canvas>
            <HScroll>
              <HArrow />
              <HThumb />
            </HScroll>
          </DocGrid>
        </Workspace>
      </Main>

      <StatusBar>
        <span><b>Drag</b> to marquee select. <b>Click</b> an object to select it.</span>
      </StatusBar>

      <StrokePanel>
        <SRow $mt={10}>
          <SLabel>Style:</SLabel>
          <BtnRow>
            <SBtn $on>
              <svg width="20" height="20" viewBox="0 0 20 20">
                <circle cx="10" cy="10" r="8" fill="none" stroke="#e2e2e2" strokeWidth="1.2" />
                <path d="M7.5 7.5l5 5M12.5 7.5l-5 5" stroke="#e2e2e2" strokeWidth="1.2" />
              </svg>
            </SBtn>
            <SBtn>
              <svg width="18" height="18" viewBox="0 0 18 18">
                <path d="M2 16L16 2" stroke="#dcdcdc" strokeWidth="1.6" />
              </svg>
            </SBtn>
            <SBtn>
              <svg width="18" height="18" viewBox="0 0 18 18">
                <path d="M2 16L16 2" stroke="#dcdcdc" strokeWidth="2" strokeDasharray="2.4 3" />
              </svg>
            </SBtn>
            <SBtn>
              <svg width="18" height="18" viewBox="0 0 18 18">
                <path d="M1 17c1-4 3-6 5-6l2 2c-1 3-4 4-7 4zM7 10L16 1l1 1-8 10z" fill="#e2e2e2" />
              </svg>
            </SBtn>
          </BtnRow>
        </SRow>
        <SRow $mt={9}>
          <SLabel>Width:</SLabel>
          <WidthTrack>
            <WidthKnob />
          </WidthTrack>
          <SInput>0 pt</SInput>
        </SRow>
        <SRow $mt={6}>
          <SLabel>Cap:</SLabel>
          <BtnRow>
            <SBtn $on>
              <svg width="22" height="14" viewBox="0 0 22 14">
                <path d="M0 0h14a7 7 0 0 1 0 14H0z" fill="#e2e2e2" />
                <path d="M0 7h14" stroke="#171717" strokeWidth="2" />
                <rect x="11" y="5" width="4" height="4" fill="#171717" />
              </svg>
            </SBtn>
            <SBtn>
              <svg width="22" height="14" viewBox="0 0 22 14">
                <rect x="0" y="0" width="16" height="14" fill="#e2e2e2" />
                <path d="M0 7h16" stroke="#2f2f2f" strokeWidth="1.4" />
                <rect x="15" y="4.5" width="5" height="5" fill="#2f2f2f" stroke="#e2e2e2" />
              </svg>
            </SBtn>
            <SBtn>
              <svg width="22" height="14" viewBox="0 0 22 14">
                <rect x="1" y="0" width="20" height="14" fill="#e2e2e2" />
                <path d="M1 7h12" stroke="#2f2f2f" strokeWidth="1.4" />
                <rect x="12" y="5" width="4" height="4" fill="#222" />
              </svg>
            </SBtn>
          </BtnRow>
        </SRow>
        <SRow $mt={7}>
          <SLabel>Join:</SLabel>
          <BtnRow>
            <SBtn $on>
              <svg width="20" height="20" viewBox="0 0 20 20">
                <path d="M1 1h6v5c0 4 3 6 6 6h6v7H12C6 19 1 14 1 7z" fill="#e2e2e2" />
                <path d="M4 1v5c0 6 4 9 9 9h6" fill="none" stroke="#171717" strokeWidth="1" />
              </svg>
            </SBtn>
            <SBtn>
              <svg width="20" height="20" viewBox="0 0 20 20">
                <path d="M1 1h6v7l4 4h8v7H9L1 10z" fill="#c8c8c8" />
                <path d="M4 1v8l6 6h9" fill="none" stroke="#2f2f2f" strokeWidth="1" />
              </svg>
            </SBtn>
            <SBtn>
              <svg width="20" height="20" viewBox="0 0 20 20">
                <path d="M1 1h7v11h11v7H1z" fill="#bbb" />
                <path d="M4 1v14h15" fill="none" stroke="#e8e8e8" strokeWidth="1" />
              </svg>
            </SBtn>
          </BtnRow>
          <MiterLabel>Miter:</MiterLabel>
          <SInput $top={-2}>1,5</SInput>
        </SRow>
        <SRow $mt={7}>
          <SLabel>Align:</SLabel>
          <BtnRow>
            <SBtn $on>
              <svg width="20" height="20" viewBox="0 0 20 20">
                <path d="M1 1h18v4H5v14H1zM8 8h11v4h-7v7H8z" fill="#e2e2e2" />
                <rect x="5" y="5" width="3" height="3" fill="#171717" />
              </svg>
            </SBtn>
            <SBtn>
              <svg width="20" height="20" viewBox="0 0 20 20">
                <path d="M5 5h14v6h-8v8H5z" fill="#e2e2e2" />
                <path d="M1 19V1h18" fill="none" stroke="#e2e2e2" strokeWidth="1" />
              </svg>
            </SBtn>
            <SBtn>
              <svg width="20" height="20" viewBox="0 0 20 20">
                <path d="M2 3h17v7h-9v9H2z" fill="#e2e2e2" />
                <path d="M10 19v-9h9" fill="none" stroke="#2f2f2f" strokeWidth="1" />
                <rect x="8.5" y="8.5" width="3" height="3" fill="#222" />
              </svg>
            </SBtn>
          </BtnRow>
        </SRow>
        <Rule $mt={13} />
        <SRow $mt={17}>
          <SLabel>Order:</SLabel>
          <BtnRow>
            <SBtn>
              <svg width="18" height="18" viewBox="0 0 18 18">
                <path d="M1 13V1h12" fill="none" stroke="#e2e2e2" strokeWidth="1.6" />
                <rect x="4" y="4" width="12" height="12" fill="#9a9a9a" />
                <rect x="1" y="1" width="6" height="6" fill="none" />
              </svg>
            </SBtn>
            <SBtn $on>
              <svg width="18" height="18" viewBox="0 0 18 18">
                <path d="M16 5v11H5" fill="none" stroke="#9a9a9a" strokeWidth="1.6" />
                <rect x="2" y="2" width="10" height="10" fill="#171717" stroke="#e2e2e2" strokeWidth="1.6" />
                <rect x="5" y="5" width="4" height="4" fill="#e2e2e2" />
              </svg>
            </SBtn>
          </BtnRow>
          <ScaleCheck>
            <span />
            <span>Scale with object</span>
          </ScaleCheck>
        </SRow>
        <Rule $mt={13} />
        <SRow $mt={17} $color="#565656">
          <SLabel>Start:</SLabel>
          <LineSelect $gap={6}>
            <svg width="24" height="4" viewBox="0 0 24 4">
              <rect width="24" height="2" y="1" fill="#b8b8b8" />
            </svg>
            <Chevron c="#666" />
          </LineSelect>
          <PctSelect>
            100 % <Chevron c="#666" />
          </PctSelect>
          <ArrowBtns>
            <ArrowBtn $bg="#191919">
              <svg width="18" height="14" viewBox="0 0 18 14">
                <path d="M0 7h13M9 3l4 4-4 4M15 0v14" fill="none" stroke="#666" strokeWidth="1.4" />
              </svg>
            </ArrowBtn>
            <ArrowBtn $bg="#333">
              <svg width="18" height="14" viewBox="0 0 18 14">
                <path d="M0 7h16M11 2l5 5-5 5M9 0v14" fill="none" stroke="#666" strokeWidth="1.4" />
              </svg>
            </ArrowBtn>
          </ArrowBtns>
        </SRow>
        <SRow $mt={8} $color="#565656">
          <SLabel>End:</SLabel>
          <LineSelect $gap={14}>
            <svg width="24" height="4" viewBox="0 0 24 4">
              <rect width="24" height="2" y="1" fill="#b8b8b8" />
            </svg>
            <Chevron c="#666" />
          </LineSelect>
          <PctSelect>
            100 % <Chevron c="#666" />
          </PctSelect>
          <ArrowBtns>
            <ArrowBtn $bg="#262626" $w={30}>
              <svg width="18" height="16" viewBox="0 0 18 16">
                <path d="M1 6c0-2 1-3 3-3h12M13 0l3 3-3 3M17 10c0 2-1 3-3 3H2M5 10l-3 3 3 3" fill="none" stroke="#666" strokeWidth="1.3" />
              </svg>
            </ArrowBtn>
            <ArrowBtn $bg="#262626" $w={30}>
              <svg width="18" height="16" viewBox="0 0 18 16">
                <circle cx="9" cy="8" r="6.5" fill="none" stroke="#666" strokeWidth="1.3" strokeDasharray="8 2" />
                <path d="M7 6l4 4M11 6l-4 4" stroke="#666" strokeWidth="1.2" />
              </svg>
            </ArrowBtn>
          </ArrowBtns>
        </SRow>
        <Rule $mt={14} />
        <SRow $mt={21}>
          <Props>Properties...</Props>
          <PressureLabel>Pressure:</PressureLabel>
          <PressureBox />
        </SRow>
      </StrokePanel>
      <StrokeLink>
        <svg width="8" height="24" viewBox="0 0 8 24">
          <path d="M1 9V1h6v8M1 15v8h6v-8M4 9v6" fill="none" stroke="#565656" strokeWidth="1.1" />
        </svg>
      </StrokeLink>

      <RightDock>
        <TabBar $h={38}>
          <Tick $before={10} $after={13} />
          <Tab $active>Appearance</Tab>
          <Tab $size={12.9}>Quick FX</Tab>
          <BarEnd $pad={7}>
            <Burger />
            <CloseDot />
          </BarEnd>
        </TabBar>
        <PanelBody $h={300}>
          <Strip />
          <ApRow $h={44}>
            <Bullet />
            <Well />
            <ApText>Stroke: 0 pt,  <Small>Normal</Small></ApText>
          </ApRow>
          <ApRow $h={41} $mt={4}>
            <Bullet />
            <Well $fill />
            <ApText>Fill:  <Small>Normal</Small></ApText>
          </ApRow>
          <AddRow>
            <AddIcon>+</AddIcon>
            Add Stroke
            <AddIcon $ml={9} $solid>+</AddIcon>
            Add Fill
            <AddTrash>
              <svg width="16" height="20" viewBox="0 0 16 20">
                <path d="M1 4h14M5 4V1h6v3M2.5 4v15h11V4M6 7v9M10 7v9" fill="none" stroke="#4f4f4f" strokeWidth="1.2" />
              </svg>
            </AddTrash>
          </AddRow>
        </PanelBody>
        <TabBar $h={38}>
          <Tick $before={10} $after={12} />
          <Tab $active>Color</Tab>
          <BarEnd $pad={6}>
            <Burger />
            <CloseDot />
          </BarEnd>
        </TabBar>
        <PanelBody $h={286}>
          <WellGroup $top={18}>
            <WellCluster />
          </WellGroup>
          <Lock>
            <svg width="10" height="14" viewBox="0 0 10 14">
              <path d="M2.5 6V3.5a2.5 2.5 0 0 1 5 0" fill="none" stroke="#9a9a9a" strokeWidth="1.2" />
              <rect x="0.5" y="6" width="9" height="8" fill="#9a9a9a" />
            </svg>
          </Lock>
          <Select>
            CMYK <Chevron c="#ccc" />
          </Select>
          <Sliders>
            {cmyk.map(([label, bg, knob, val]) => (
              <React.Fragment key={label}>
                <SliderLabel>{label}</SliderLabel>
                <Track $bg={bg}>
                  <Knob $x={knob} />
                </Track>
                <ValueBox>{val}</ValueBox>
              </React.Fragment>
            ))}
          </Sliders>
          <Spectrum />
          <OpacityCaption>Opacity</OpacityCaption>
          <OpacityDot />
          <OpacityTrack>
            <Knob $x={173} $fill="#2a2a2a" $ring="#2a2a2a" />
          </OpacityTrack>
          <OpacityValue $x={238} $y={257}>100 %</OpacityValue>
          <OpacityChevron>
            <Chevron c="#ccc" />
          </OpacityChevron>
        </PanelBody>
        <TabBar $h={39}>
          <Tick $before={10} $after={12} />
          <Tab $active>Swatches</Tab>
          <BarEnd $pad={6}>
            <Burger />
            <CloseDot />
          </BarEnd>
        </TabBar>
        <PanelBody $h={260}>
          <WellGroup $top={19}>
            <WellCluster />
          </WellGroup>
          <SwOpacityLabel>Opacity:</SwOpacityLabel>
          <SwOpacity>
            100 % <Chevron c="#ddd" />
          </SwOpacity>
          <SwRule />
          <RecentLabel>Recent:</RecentLabel>
          <RecentBox />
          <ColorsSelect>
            <svg width="16" height="16" viewBox="0 0 16 16">
              <path d="M6 9l4-4M5 6L2 9a2.5 2.5 0 0 0 4 4l3-3M7 4l2.5-2.5a2.5 2.5 0 0 1 4 4L11 8" fill="none" stroke="#bbb" strokeWidth="1.2" />
            </svg>
            Colors
            <Chevron c="#ccc" />
          </ColorsSelect>
          <AddSwatch>
            <svg width="18" height="18" viewBox="0 0 18 18">
              <rect x="0" y="1" width="8" height="7" rx="2" fill="#d0d0d0" />
              <rect x="0" y="10" width="8" height="8" rx="2" fill="#d0d0d0" />
              <rect x="10" y="10" width="8" height="8" rx="2" fill="#d0d0d0" />
              <path d="M14 1v6M11 4h6" stroke="#d0d0d0" strokeWidth="1.1" />
            </svg>
          </AddSwatch>
          <QuickSwatches>
            <Quick $c="#fff">
              <svg width="17" height="18" viewBox="0 0 17 18">
                <path d="M0 18L17 0" stroke="#d2404a" strokeWidth="1.4" />
              </svg>
            </Quick>
            <Quick $c="#231f20" />
            <Quick $c="#a0a0a0" />
            <Quick $c="#fff" />
          </QuickSwatches>
          <SwatchWrap>
            <SwatchGrid>
              {swatchColors.map((c, i) => (
                <Swatch key={i} $c={c} $picked={i === 0} />
              ))}
            </SwatchGrid>
            <SwatchScroll>
              <ScrollArrow $top={8} $color="#555" />
              <ScrollThumb $top={23} $h={13} $color="#555" />
              <ScrollArrow $top={59} $down $color="#555" />
            </SwatchScroll>
          </SwatchWrap>
          <SearchBox>
            <svg width="16" height="16" viewBox="0 0 16 16">
              <circle cx="6.5" cy="6.5" r="5" fill="none" stroke="#ccc" strokeWidth="1.3" />
              <path d="M10 10l5 5" stroke="#ccc" strokeWidth="1.5" />
            </svg>
            Search
          </SearchBox>
        </PanelBody>
      </RightDock>
    </Shell>
  );
}
